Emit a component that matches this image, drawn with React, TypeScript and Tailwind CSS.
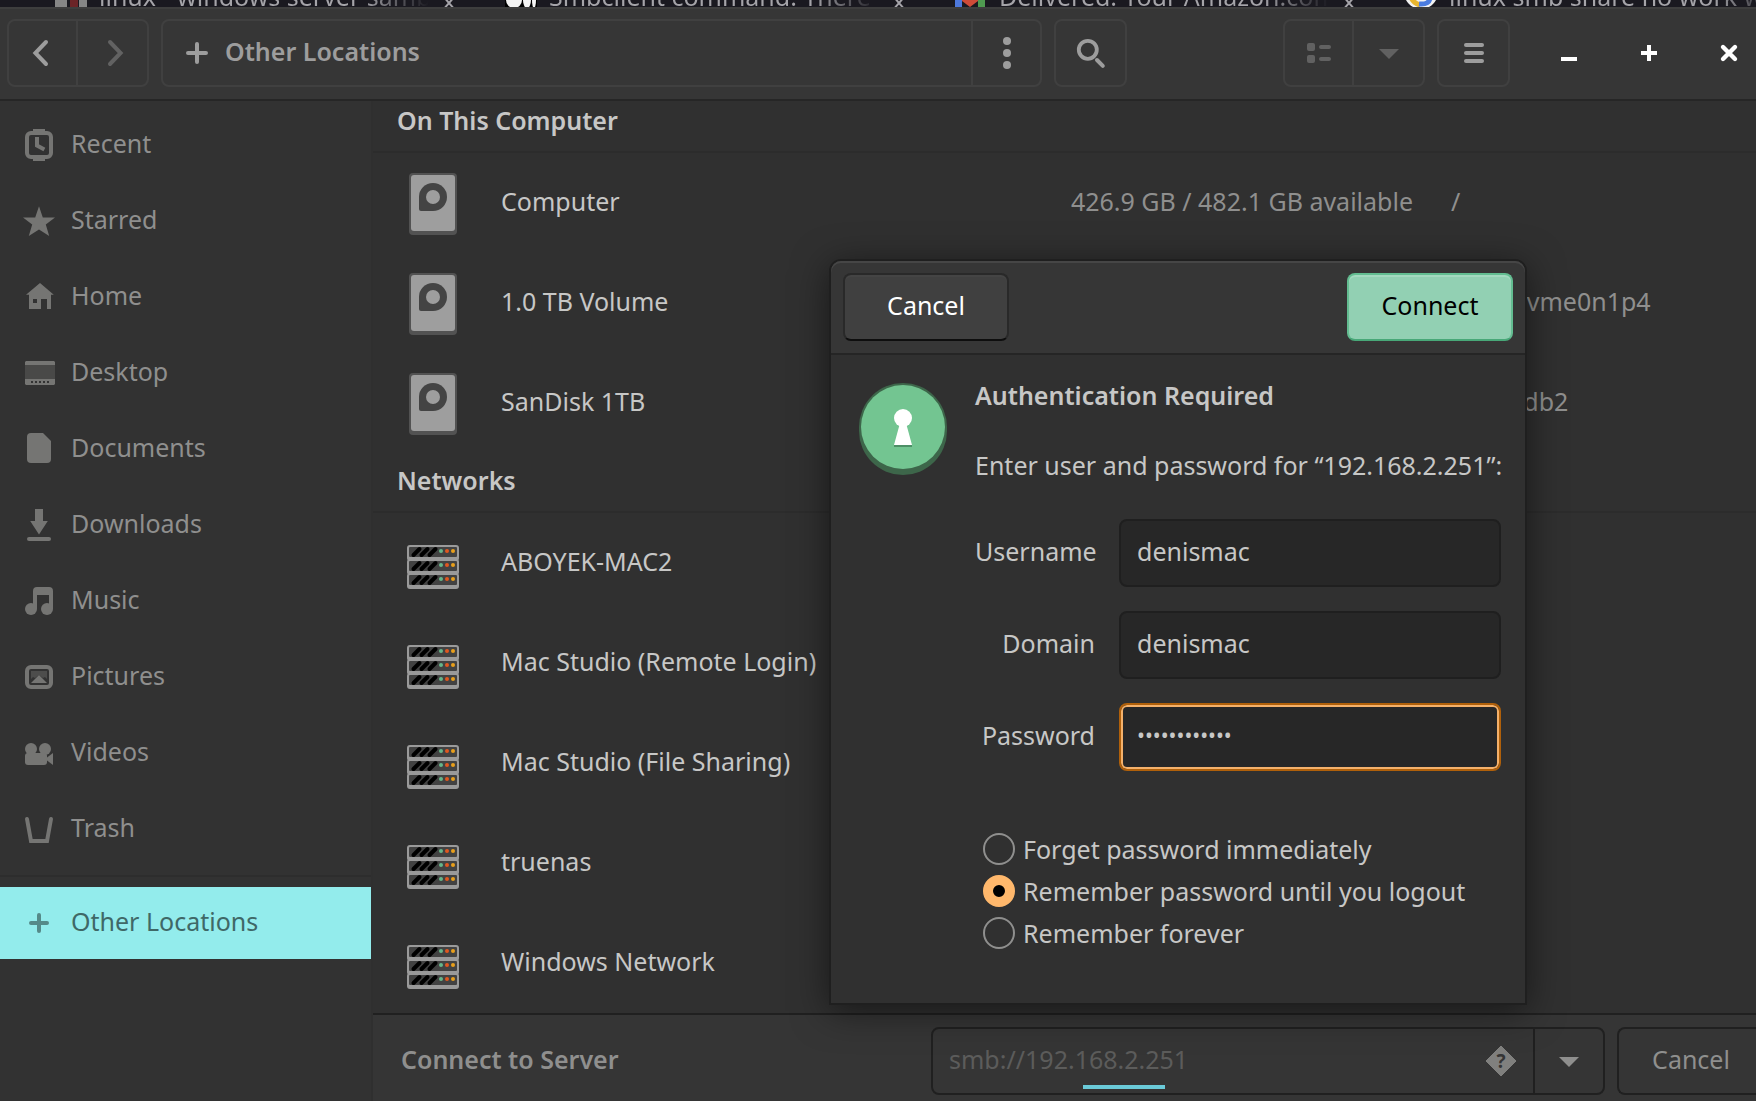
import { useState } from 'react';
import type { ReactNode } from 'react';

const tabs = [
  { title: 'linux - windows server samba', icon: 'grid' },
  { title: 'Smbclient command: There is', icon: 'medium' },
  { title: 'Delivered: Your Amazon.com', icon: 'gmail' },
  { title: 'linux smb share no work with', icon: 'google' },
];

const places = [
  {
    name: 'Recent',
    icon: (
      <>
        <rect x="2" y="2" width="12" height="12" rx="2" fill="none" stroke="currentColor" strokeWidth="2" />
        <path d="M5 0h6v2H5zM5 14h6v2H5z" />
        <path d="M7 4v4.3l3.7 2" fill="none" stroke="currentColor" strokeWidth="2" />
      </>
    ),
  },
  {
    name: 'Starred',
    icon: <path d="M8 .6l1.9 5.6H16l-4.6 3.6 1.7 5.7L8 12.2l-5.1 3.3 1.7-5.7L0 6.2h6.1z" />,
  },
  {
    name: 'Home',
    icon: <path fillRule="evenodd" d="M8.5 1l6.9 5.9H14V14h-2V9H9v5H3V6.9H1.5zM5 9v2h2V9z" />,
  },
  {
    name: 'Desktop',
    icon: (
      <>
        <path d="M1 4h15v7H1z" opacity=".35" />
        <path d="M1.5 2h14l.5.5V4H1V2.5z" />
        <path
          fillRule="evenodd"
          d="M1 11h15v2.5l-.5.5h-14l-.5-.5zM4 12v1h1v-1zM6 12v1h1v-1zM8 12v1h1v-1zM10 12v1h1v-1zM12 12v1h1v-1z"
        />
      </>
    ),
  },
  {
    name: 'Documents',
    icon: <path d="M4 0h6l4 4v9a2 2 0 0 1-2 2H4a2 2 0 0 1-2-2V2a2 2 0 0 1 2-2z" />,
  },
  {
    name: 'Downloads',
    icon: (
      <>
        <path d="M6 0h4v6h2.4L8 12.7 3.6 6H6z" />
        <rect x="2" y="14" width="12" height="2" rx="1" />
      </>
    ),
  },
  {
    name: 'Music',
    icon: (
      <>
        <path d="M5 12V3a2 2 0 0 1 2-2h6a2 2 0 0 1 2 2v9h-2V5H7v7z" />
        <circle cx="4" cy="12" r="3" />
        <circle cx="12" cy="12" r="3" />
      </>
    ),
  },
  {
    name: 'Pictures',
    icon: (
      <>
        <rect x="2" y="3" width="12" height="10" rx="2" fill="none" stroke="currentColor" strokeWidth="2" />
        <path d="M4 5h8v4l-1-1-1 .5L8 7 6 8.500 5 8 4 9z" opacity=".4" />
        <path d="M8 7l4 4H4z" />
      </>
    ),
  },
  {
    name: 'Videos',
    icon: (
      <>
        <circle cx="4" cy="6" r="3" />
        <circle cx="11" cy="6" r="3" />
        <rect x="1" y="8" width="11" height="6" rx="1.5" />
        <path d="M15 8v6l-4-3z" />
      </>
    ),
  },
  {
    name: 'Trash',
    icon: (
      <path d="M2 3l2 11h8l2-11" fill="none" stroke="currentColor" strokeWidth="2" strokeLinecap="round" />
    ),
  },
];

const volumes = [
  { name: 'Computer', space: '426.9 GB / 482.1 GB available', mount: '/' },
  { name: '1.0 TB Volume', space: '', mount: '/dev/nvme0n1p4' },
  { name: 'SanDisk 1TB', space: '', mount: '/dev/sdb2' },
];

const networks = [
  'ABOYEK-MAC2',
  'Mac Studio (Remote Login)',
  'Mac Studio (File Sharing)',
  'truenas',
  'Windows Network',
];

const rememberOptions = [
  'Forget password immediately',
  'Remember password until you logout',
  'Remember forever',
];

function Icon({ children, className = '' }: { children: ReactNode; className?: string }) {
  return (
    <svg viewBox="0 0 16 16" fill="currentColor" className={`size-8 shrink-0 ${className}`} aria-hidden="true">
      {children}
    </svg>
  );
}

function Plus() {
  return <path d="M8 4v8M4 8h8" fill="none" stroke="currentColor" strokeWidth="2" strokeLinecap="round" />;
}

function Favicon({ kind }: { kind: string }) {
  return (
    <svg viewBox="0 0 32 32" className="size-8 shrink-0" aria-hidden="true">
      {kind === 'grid' && (
        <>
          <path d="M0 16h12v12H0zM24 16h8v12h-8z" fill="#868686" />
          <path d="M15 16h8v12h-8z" fill="#6b2427" />
        </>
      )}
      {kind === 'medium' && (
        <>
          <rect width="32" height="32" fill="#000" />
          <ellipse cx="9" cy="20" rx="8" ry="8" fill="#f4f4f4" />
          <ellipse cx="22" cy="20" rx="4" ry="8" fill="#f4f4f4" />
          <ellipse cx="29" cy="20" rx="2" ry="8" fill="#f4f4f4" />
        </>
      )}
      {kind === 'gmail' && (
        <>
          <path d="M0 8h7v20H0z" fill="#4d78dc" />
          <path d="M23 8h7v20h-7z" fill="#4f9a50" />
          <path d="M7 14l8 6 8-6v7l-8 6-8-6z" fill="#cf4b38" />
        </>
      )}
      {kind === 'google' && (
        <>
          <circle cx="16" cy="12" r="17" fill="#f2f2f2" />
          <path d="M5 14q2 9 10 11" fill="none" stroke="#e8b52f" strokeWidth="5" />
          <path d="M14 24q11 1 11-7h-9" fill="none" stroke="#4b7ce0" strokeWidth="5" />
        </>
      )}
    </svg>
  );
}

function BrowserTabs() {
  return (
    <div className="h-[7px] shrink-0 overflow-hidden bg-[#1a1920]">
      <div className="-mt-6 flex pl-[55px]">
        {tabs.map((tab) => (
          <div key={tab.title} className="flex w-[450px] shrink-0 items-center gap-3 text-[#a5a4a9]">
            <Favicon kind={tab.icon} />
            <span className="w-[330px] overflow-hidden bg-gradient-to-r from-[#a5a4a9] from-80% to-transparent bg-clip-text leading-10 whitespace-nowrap text-transparent">
              {tab.title}
            </span>
            <svg viewBox="0 0 16 16" className="mt-4 size-4" aria-hidden="true">
              <path d="M2 0l12 14M14 0L2 14" stroke="currentColor" strokeWidth="2" />
            </svg>
          </div>
        ))}
      </div>
    </div>
  );
}

function HeaderBar() {
  const group = 'flex h-[68px] shrink-0 rounded-lg border-2 border-[#404040]';
  const cell = 'flex w-[69px] items-center justify-center';

  return (
    <header className="flex shrink-0 items-center gap-3 border-t-2 border-b-2 border-t-[#3e3e3e] border-b-[#262626] bg-[#363636] pt-[10px] pb-3 pl-[7px] text-[#9d9d9d]">
      <div className={group}>
        <button type="button" aria-label="Back" className={`${cell} border-r-2 border-[#404040]`}>
          <Icon>
            <path d="M10.500 2.500L5.200 8l5.300 5.500" transform="translate(-1)" fill="none" stroke="currentColor" strokeWidth="2" strokeLinecap="round" />
          </Icon>
        </button>
        <button type="button" aria-label="Forward" className={`${cell} text-[#626262]`}>
          <Icon>
            <path d="M6.500 2.500L11.800 8l-5.300 5.500" fill="none" stroke="currentColor" strokeWidth="2" strokeLinecap="round" />
          </Icon>
        </button>
      </div>

      <div className="flex h-[68px] min-w-0 flex-1 rounded-lg border-2 border-[#404040]">
        <button type="button" className="flex flex-1 items-center gap-3 pl-[18px] font-semibold">
          <Icon>
            <path d="M8 3.500v9M3.500 8h9" fill="none" stroke="currentColor" strokeWidth="2" strokeLinecap="round" />
          </Icon>
          <span className="pb-1">Other Locations</span>
        </button>
        <button type="button" aria-label="Location menu" className={`${cell} border-l-2 border-[#404040]`}>
          <Icon>
            <circle cx="8" cy="2" r="2" />
            <circle cx="8" cy="8" r="2" />
            <circle cx="8" cy="14" r="2" />
          </Icon>
        </button>
      </div>

      <div className={`${group} mr-36`}>
        <button type="button" aria-label="Search" className={cell}>
          <Icon>
            <circle cx="6.400" cy="6.400" r="4.500" fill="none" stroke="currentColor" strokeWidth="1.900" />
            <path d="M11 11.500l2.900 2.900" stroke="currentColor" strokeWidth="2" strokeLinecap="round" />
          </Icon>
        </button>
      </div>

      <div className={`${group} text-[#616161]`}>
        <button type="button" aria-label="List view" className={`${cell} border-r-2 border-[#404040]`}>
          <Icon>
            <rect x="2" y="3" width="4" height="4" rx="1" />
            <rect x="2" y="9" width="4" height="4" rx="1" />
            <rect x="8" y="4" width="6" height="2" rx="1" />
            <rect x="8" y="10" width="6" height="2" rx="1" />
          </Icon>
        </button>
        <button type="button" aria-label="View options" className={cell}>
          <Icon>
            <path d="M3 6h10l-5 5z" />
          </Icon>
        </button>
      </div>

      <div className={group}>
        <button type="button" aria-label="Menu" className={cell}>
          <Icon>
            <rect x="3" y="3" width="10" height="2" rx="1" />
            <rect x="3" y="7" width="10" height="2" rx="1" />
            <rect x="3" y="11" width="10" height="2" rx="1" />
          </Icon>
        </button>
      </div>

      <div className="ml-5 flex shrink-0 gap-[26px] text-white">
        <button type="button" aria-label="Minimize" className="flex w-[54px] justify-center">
          <Icon>
            <path d="M4 10h8v2H4z" />
          </Icon>
        </button>
        <button type="button" aria-label="Maximize" className="flex w-[54px] justify-center">
          <Icon>
            <path d="M7 4h2v3h3v2H9v3H7V9H4V7h3z" />
          </Icon>
        </button>
        <button type="button" aria-label="Close" className="flex w-[54px] justify-center">
          <Icon>
            <path d="M5 5l6 6M11 5l-6 6" stroke="currentColor" strokeWidth="2.200" strokeLinecap="round" />
          </Icon>
        </button>
      </div>
    </header>
  );
}

function Sidebar() {
  return (
    <nav className="w-[373px] shrink-0 border-r-2 border-[#2f2f2f] bg-[#323232] pt-2 text-[#8f8f8e]">
      <ul className="flex flex-col gap-1">
        {places.map((place) => (
          <li key={place.name}>
            <a href="#" className="flex h-[72px] items-center gap-4 pl-[23px]">
              <Icon className="text-[#757573]">{place.icon}</Icon>
              <span className="pb-1">{place.name}</span>
            </a>
          </li>
        ))}
      </ul>
      <hr className="my-[10px] border-t-2 border-[#2d2d2d]" />
      <a href="#" aria-current="page" className="flex h-[72px] items-center gap-4 bg-[#93ecec] pl-[23px] text-[#3f6867]">
        <Icon className="text-[#558a89]">
          <Plus />
        </Icon>
        <span className="pb-1">Other Locations</span>
      </a>
    </nav>
  );
}

function DriveIcon() {
  return (
    <svg viewBox="0 0 64 64" className="size-16 shrink-0" aria-hidden="true">
      <rect x="8" y="2" width="48" height="62" rx="4" fill="#525252" />
      <rect x="10" y="4" width="44" height="56" rx="3" fill="#9e9e9e" />
      <path fill="#444" d="M32 12a14 14 0 0 1 0 28H20a2 2 0 0 1-2-2V26a14 14 0 0 1 14-14z" />
      <circle cx="32" cy="26" r="7" fill="#9e9e9e" />
    </svg>
  );
}

function ServerIcon() {
  return (
    <svg viewBox="0 0 64 64" className="size-16 shrink-0" aria-hidden="true">
      {[14, 28, 42].map((y) => (
        <g key={y}>
          <rect x="6" y={y} width="52" height="16" rx="3" fill="#9a9a9a" />
          <rect x="8" y={y + 2} width="48" height="10" rx="1" fill="#424242" />
          <path
            d={`M12.5 ${y + 10}l6-6M20.5 ${y + 10}l6-6M28.5 ${y + 10}l6-6`}
            stroke="#000"
            strokeWidth="4"
            strokeLinecap="round"
          />
          <circle cx="40" cy={y + 6} r="2" fill="#66b68a" />
          <circle cx="46" cy={y + 6} r="2" fill="#e1571f" />
          <circle cx="52" cy={y + 6} r="2" fill="#e9a01c" />
        </g>
      ))}
    </svg>
  );
}

function SectionTitle({ children }: { children: ReactNode }) {
  return (
    <h2 className="flex h-[60px] items-center border-b-2 border-[#2c2c2c] pb-1 pl-6 font-semibold">{children}</h2>
  );
}

function Locations() {
  return (
    <main className="min-h-0 flex-1 overflow-hidden bg-[#303030] text-[#c7c7c6]">
      {/* list is scrolled slightly past its top */}
      <div className="-mt-2">
        <SectionTitle>On This Computer</SectionTitle>
        <ul>
          {volumes.map((volume) => (
            <li key={volume.name} className="flex h-[100px] items-center pl-7">
              <DriveIcon />
              <span className="flex-1 pb-1 pl-9">{volume.name}</span>
              <span className="pb-1 text-[#8f8f8e]">{volume.space}</span>
              <span className="ml-[38px] w-[305px] pb-1 text-[#8f8f8e]">{volume.mount}</span>
            </li>
          ))}
        </ul>
        <SectionTitle>Networks</SectionTitle>
        <ul>
          {networks.map((name) => (
            <li key={name} className="flex h-[100px] items-center pl-7">
              <ServerIcon />
              <span className="pb-1 pl-9">{name}</span>
            </li>
          ))}
        </ul>
      </div>
    </main>
  );
}

function ConnectBar() {
  return (
    <footer className="flex shrink-0 items-center border-t-2 border-[#202020] bg-[#353535] pt-3 pb-[6px] pl-7 text-[#8f8f8e]">
      <label htmlFor="server" className="flex-1 pb-1 font-semibold">
        Connect to Server
      </label>
      <div className="relative flex h-[68px] w-[674px] shrink-0 rounded-lg border-2 border-[#202020]">
        <input
          id="server"
          type="text"
          disabled
          defaultValue="smb://192.168.2.251"
          className="min-w-0 flex-1 bg-transparent pb-1 pl-4 text-[#5c5c5b]"
        />
        <button type="button" aria-label="Help" className="flex w-16 items-center justify-center">
          <svg viewBox="0 0 32 32" className="size-8" aria-hidden="true">
            <path d="M16 1l15 15-15 15L1 16z" fill="#80807e" stroke="#80807e" strokeWidth="1" strokeLinejoin="round" />
            <text x="16" y="23" textAnchor="middle" fontSize="19" fontWeight="700" fill="#353535">
              ?
            </text>
          </svg>
        </button>
        <button
          type="button"
          aria-label="Recent servers"
          className="flex w-[70px] items-center justify-center border-l-2 border-[#202020]"
        >
          <Icon>
            <path d="M3 6h10l-5 5z" />
          </Icon>
        </button>
        {/* activity pulse along the bottom of the entry */}
        <div className="absolute bottom-1 left-[150px] h-1 w-[82px] bg-[#6acad8]" />
      </div>
      <button
        type="button"
        className="ml-3 h-[68px] w-[139px] shrink-0 rounded-l-lg border-2 border-r-0 border-[#202020] pb-1 pl-[7px]"
      >
        Cancel
      </button>
    </footer>
  );
}

function KeyholeIcon() {
  return (
    <svg viewBox="0 0 88 92" className="h-[92px] w-[88px] shrink-0" aria-hidden="true">
      <path d="M0 44a44 44 0 0 1 88 0v4a44 44 0 0 1-88 0z" fill="#3d664a" />
      <circle cx="44" cy="44" r="42" fill="#73c591" />
      <path d="M35 62h18v2H35z" fill="#4d8f66" />
      <circle cx="44" cy="35" r="9" fill="#fff" />
      <path d="M41 40h6l6 22H35z" fill="#fff" />
    </svg>
  );
}

function AuthDialog() {
  const [remember, setRemember] = useState(rememberOptions[1]);
  const field = 'h-[68px] min-w-0 rounded-lg border-2 bg-[#272727] pb-1 pl-4 outline-none';

  return (
    <div
      role="dialog"
      aria-labelledby="auth-title"
      className="absolute top-[259px] left-[829px] w-[698px] rounded-t-xl border-2 border-[#1f1f1f] bg-[#303030] text-[#c7c7c6] shadow-[0_6px_36px_rgba(0,0,0,0.5)]"
    >
      <div className="flex justify-between rounded-t-[10px] border-b-2 border-[#252525] bg-[#363636] p-3 shadow-[inset_0_2px_#464646]">
        <button
          type="button"
          className="h-[68px] w-[166px] rounded-lg border-2 border-[#292929] border-b-[#0e0e0e] bg-[#404040] pb-1 text-white shadow-[inset_0_2px_#444444]"
        >
          Cancel
        </button>
        <button
          type="submit"
          form="auth-form"
          className="h-[68px] w-[166px] rounded-lg border-2 border-[#63bd91] border-b-[#48a878] bg-[#92d0b3] pb-1 text-black shadow-[inset_0_2px_#a4d9c0]"
        >
          Connect
        </button>
      </div>

      <form
        id="auth-form"
        onSubmit={(e) => e.preventDefault()}
        className="flex gap-7 pt-7 pr-6 pb-[54px] pl-7"
      >
        <KeyholeIcon />
        <div className="min-w-0 flex-1">
          <h1 id="auth-title" className="leading-6 font-semibold">
            Authentication Required
          </h1>
          <p className="mt-[46px] leading-6 whitespace-nowrap">Enter user and password for “192.168.2.251”:</p>

          <div className="mt-[42px] grid grid-cols-[120px_1fr] items-center gap-6">
            <label htmlFor="username" className="pb-1 text-right">Username</label>
            <input id="username" type="text" defaultValue="denismac" className={`${field} border-[#1f1f1f]`} />
            <label htmlFor="domain" className="pb-1 text-right">Domain</label>
            <input id="domain" type="text" defaultValue="denismac" className={`${field} border-[#1f1f1f]`} />
            <label htmlFor="password" className="pb-1 text-right">Password</label>
            <input
              id="password"
              type="password"
              defaultValue="abcdefghijkl"
              className={`${field} border-[#b0600a] text-[21px] shadow-[inset_0_0_0_2px_#f5b16a]`}
            />
          </div>

          <div className="mt-[62px] flex flex-col gap-[10px] pl-2">
            {rememberOptions.map((option) => (
              <label key={option} className="flex h-8 items-center gap-2 whitespace-nowrap">
                <input
                  type="radio"
                  name="remember"
                  checked={remember === option}
                  onChange={() => setRemember(option)}
                  className="size-8 shrink-0 appearance-none rounded-full border-2 border-[#8f8f8e] checked:border-10 checked:border-[#ffb86c] checked:bg-black"
                />
                <span>{option}</span>
              </label>
            ))}
          </div>
        </div>
      </form>
    </div>
  );
}

export default function App() {
  return (
    <div className="relative flex h-screen flex-col overflow-hidden bg-[#303030] font-['Noto_Sans',sans-serif] text-[25px] leading-8">
      <BrowserTabs />
      <HeaderBar />
      <div className="flex min-h-0 flex-1">
        <Sidebar />
        <div className="flex min-w-0 flex-1 flex-col">
          <Locations />
          <ConnectBar />
        </div>
      </div>
      <AuthDialog />
    </div>
  );
}
